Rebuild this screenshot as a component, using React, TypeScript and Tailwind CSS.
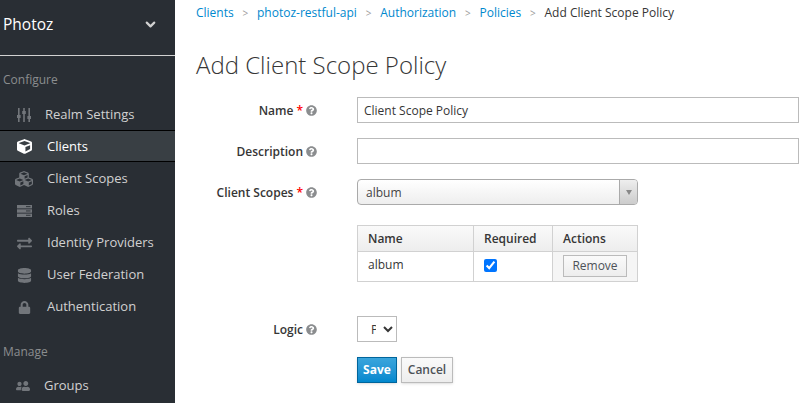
import { FaCube, FaCubes, FaDatabase, FaExchangeAlt, FaLock, FaQuestionCircle, FaUserFriends } from 'react-icons/fa'
import { ChevronDown } from 'lucide-react'

function SlidersIcon() {
  return (
    <svg width="14" height="14" viewBox="0 0 14 14" fill="#72767b">
      <rect x="1" y="0" width="1.6" height="14" />
      <rect x="0" y="7" width="3.6" height="3" />
      <rect x="6.2" y="0" width="1.6" height="14" />
      <rect x="5.2" y="3" width="3.6" height="3" />
      <rect x="11.4" y="0" width="1.6" height="14" />
      <rect x="10.4" y="8" width="3.6" height="3" />
    </svg>
  )
}

function RolesIcon() {
  return (
    <svg width="15" height="12" viewBox="0 0 15 12" fill="#72767b">
      <rect x="0" y="0" width="15" height="3.4" />
      <rect x="0" y="4.3" width="15" height="3.4" />
      <rect x="0" y="8.6" width="15" height="3.4" />
      <rect x="9" y="1.2" width="4.5" height="0.9" fill="#292e34" />
      <rect x="9" y="5.5" width="4.5" height="0.9" fill="#292e34" />
      <rect x="9" y="9.8" width="4.5" height="0.9" fill="#292e34" />
    </svg>
  )
}

const configure = [
  { label: 'Realm Settings', icon: <SlidersIcon /> },
  { label: 'Clients', icon: <FaCube size={15} color="#fff" />, active: true },
  { label: 'Client Scopes', icon: <FaCubes size={18} color="#72767b" /> },
  { label: 'Roles', icon: <RolesIcon /> },
  { label: 'Identity Providers', icon: <FaExchangeAlt size={15} color="#72767b" /> },
  { label: 'User Federation', icon: <FaDatabase size={15} color="#72767b" /> },
  { label: 'Authentication', icon: <FaLock size={13} color="#72767b" /> },
]

function Help() {
  return <FaQuestionCircle size={11} className="ml-[3px] inline-block align-[-1px] text-[#8b8d8f]" />
}

function FormLabel({ text, required }: { text: string; required?: boolean }) {
  return (
    <label className="w-[122px] shrink-0 pt-[1px] text-right text-[12px] font-semibold text-[#363636] whitespace-nowrap">
      {text}
      {required && <span className="ml-[3px] text-[#f00]">*</span>}
      <Help />
    </label>
  )
}

function Crumb({ text }: { text: string }) {
  return (
    <>
      <a className="text-[#0088ce]">{text}</a>
      <span className="mx-[8.8px] text-[10px] text-[#9c9c9c]">{'>'}</span>
    </>
  )
}

export default function App() {
  return (
    <div className="flex h-[403px] w-[807px] overflow-hidden bg-white font-['Open_Sans',sans-serif] text-[#363636]">
      <aside className="w-[175px] shrink-0 bg-[#292e34] text-[13px] text-[#d1d1d1]">
        <div className="flex h-[56px] items-center justify-between border-b border-[#d1d1d1] pr-[17px] pb-[6px] pl-[3px]">
          <span className="text-[15.5px] text-white">Photoz</span>
          <ChevronDown size={15} strokeWidth={3.5} className="text-[#d1d1d1]" />
        </div>
        <h3 className="mt-[15px] mb-[10px] pl-[3px] text-[12px] leading-[18px] text-[#8b8d8f]">Configure</h3>
        <ul>
          {configure.map(item => (
            <li
              key={item.label}
              className={
                item.active
                  ? '-mt-[1px] mb-[1px] flex h-[32px] items-center border-y border-black bg-[#393f44] pt-[1px] text-white'
                  : 'flex h-[32px] items-center'
              }
            >
              <span className="flex w-[47px] shrink-0 justify-center pr-[3px] pl-[4px]">{item.icon}</span>
              <span className={item.label === 'Realm Settings' ? '-ml-[2px]' : ''}>{item.label}</span>
            </li>
          ))}
        </ul>
        <h3 className="mt-[20px] mb-[9px] pl-[3px] text-[12px] leading-[18px] text-[#8b8d8f]">Manage</h3>
        <div className="flex h-[32px] items-center">
          <span className="flex w-[44px] shrink-0 justify-center pr-[3px] pl-[4px]">
            <FaUserFriends size={14} color="#72767b" className="-scale-x-100" />
          </span>
          <span>Groups</span>
        </div>
      </aside>

      <main className="min-w-0 flex-1 pl-[21px]">
        <nav className="flex h-[26px] items-center text-[12px] whitespace-nowrap">
          <Crumb text="Clients" />
          <Crumb text="photoz-restful-api" />
          <Crumb text="Authorization" />
          <Crumb text="Policies" />
          <span>Add Client Scope Policy</span>
        </nav>
        <h1 className="mt-[23px] text-[24px] leading-[32px] font-light text-[#363636]">Add Client Scope Policy</h1>

        <form className="mt-[16px] -ml-[1px]">
          <div className="flex h-[26px] items-center">
            <FormLabel text="Name" required />
            <input
              readOnly
              value="Client Scope Policy"
              className="ml-[40px] h-[26px] w-[442px] border border-[#bbb] px-[6px] text-[12px] text-[#363636] outline-none"
            />
          </div>
          <div className="mt-[15px] flex h-[26px] items-center">
            <FormLabel text="Description" />
            <input readOnly className="ml-[40px] h-[26px] w-[442px] border border-[#bbb] px-[6px] outline-none" />
          </div>
          <div className="mt-[15px] flex h-[26px] items-center">
            <FormLabel text="Client Scopes" required />
            <div className="ml-[40px] flex h-[26px] w-[281px] overflow-hidden rounded-[4px] border border-[#aaa] bg-linear-to-b from-white to-[#eee] text-[12px]">
              <span className="flex-1 pt-[4px] pl-[8px] text-[#444]">album</span>
              <span className="flex w-[18px] items-center justify-center border-l border-[#aaa] bg-linear-to-b from-[#eee] to-[#ccc]">
                <span className="h-0 w-0 border-x-[3.5px] border-t-[5px] border-x-transparent border-t-[#888]" />
              </span>
            </div>
          </div>

          <div className="mt-[20px] ml-[162px] w-[281px]">
            <table className="w-full table-fixed border-collapse border border-[#d1d1d1] text-[12px]">
              <thead>
                <tr className="h-[26px] bg-linear-to-b from-[#fafafa] to-[#ededed] text-left">
                  <th className="w-[116px] border border-[#d1d1d1] pl-[10px] font-semibold">Name</th>
                  <th className="w-[79px] border border-[#d1d1d1] pl-[10px] font-semibold">Required</th>
                  <th className="border border-[#d1d1d1] pl-[10px] font-semibold">Actions</th>
                </tr>
              </thead>
              <tbody>
                <tr className="h-[30px]">
                  <td className="border border-[#d1d1d1] pb-[4px] pl-[10px]">album</td>
                  <td className="border border-[#d1d1d1] pb-[3px] pl-[10px]">
                    <input type="checkbox" checked readOnly className="block h-[13px] w-[13px] accent-[#0075ff]" />
                  </td>
                  <td className="border border-[#d1d1d1] bg-[#f5f5f5] pb-[2px] text-center">
                    <button
                      type="button"
                      className="h-[22px] w-[64px] border border-[#bbb] bg-linear-to-b from-[#fafafa] to-[#ededed] text-[12px] text-[#4d5258]"
                    >
                      Remove
                    </button>
                  </td>
                </tr>
              </tbody>
            </table>
          </div>

          <div className="mt-[34px] flex h-[26px] items-center">
            <FormLabel text="Logic" />
            <select className="ml-[40px] h-[26px] w-[40px] border border-[#bbb] bg-white pr-[4px] pl-[9px] text-[12px] text-[#363636]">
              <option>Positive</option>
            </select>
          </div>

          <div className="mt-[15px] ml-[162px] flex gap-[4px] text-[12px]">
            <button
              type="button"
              className="h-[26px] w-[40px] border border-[#00659c] bg-linear-to-b from-[#39a5dc] to-[#0088ce] font-bold text-white shadow-sm"
            >
              Save
            </button>
            <button
              type="button"
              className="h-[26px] w-[52px] border border-[#bbb] bg-linear-to-b from-[#fafafa] to-[#ededed] font-semibold text-[#4d5258] shadow-sm"
            >
              Cancel
            </button>
          </div>
        </form>
      </main>
    </div>
  )
}
